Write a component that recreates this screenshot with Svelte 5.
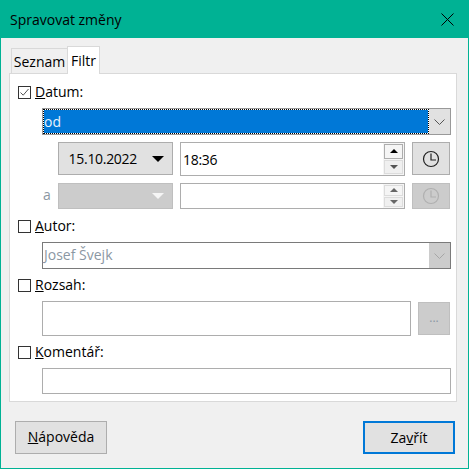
<script>
    let dateFrom = '15.10.2022';
    let timeFrom = '18:36';
    let author = 'Josef Švejk';
</script>

{#snippet clock()}
    <svg class="clock" viewBox="0 0 18 18" width="18" height="18">
        <circle cx="9" cy="9" r="7.5" />
        <path d="M9 3.5V10H14" />
    </svg>
{/snippet}

{#snippet spin()}
    <div class="spin">
        <div class="spin-btn up"><i class="tri-up"></i></div>
        <div class="spin-btn"><i class="tri-down"></i></div>
    </div>
{/snippet}

<main class="window">
    <header class="titlebar">
        <span>Spravovat změny</span>
        <svg class="close" viewBox="0 0 13 13" width="13" height="13">
            <path d="M0.5 0.5L12.5 12.5M12.5 0.5L0.5 12.5" />
        </svg>
    </header>

    <div class="content">
        <nav class="tabs">
            <div class="tab">Seznam</div>
            <div class="tab active">Filtr</div>
        </nav>

        <section class="panel">
            <label class="check-row">
                <span class="box">
                    <svg viewBox="0 0 13 13" width="13" height="13"><path d="M2.5 6.5L5.2 9.2L10.5 3" /></svg>
                </span>
                <span class="label"><u>D</u>atum:</span>
            </label>
            <div class="indent combo focused">
                <div class="combo-value">od</div>
                <div class="combo-btn">
                    <svg viewBox="0 0 11 6" width="11" height="6"><path d="M0.5 0.5L5.5 5.5L10.5 0.5" /></svg>
                </div>
            </div>

            <div class="range-row first">
                <div class="date-btn">
                    <span class="digits">{dateFrom}</span>
                    <i class="tri-down big"></i>
                </div>
                <div class="time-field">
                    <span class="digits">{timeFrom}</span>
                    {@render spin()}
                </div>
                <div class="clock-btn">{@render clock()}</div>
            </div>

            <div class="range-row second">
                <span class="and">a</span>
                <div class="date-btn off">
                    <i class="tri-down big"></i>
                </div>
                <div class="time-field off">
                    {@render spin()}
                </div>
                <div class="clock-btn off">{@render clock()}</div>
            </div>

            <label class="check-row autor">
                <span class="box"></span>
                <span class="label"><u>A</u>utor:</span>
            </label>
            <div class="indent combo disabled">
                <div class="combo-value">{author}</div>
                <div class="combo-btn">
                    <svg viewBox="0 0 11 6" width="11" height="6"><path d="M0.5 0.5L5.5 5.5L10.5 0.5" /></svg>
                </div>
            </div>

            <label class="check-row rozsah">
                <span class="box"></span>
                <span class="label"><u>R</u>ozsah:</span>
            </label>
            <div class="indent range-field">
                <div class="field"></div>
                <div class="dots-btn">...</div>
            </div>

            <label class="check-row komentar">
                <span class="box"></span>
                <span class="label"><u>K</u>omentář:</span>
            </label>
            <div class="indent field comment"></div>
        </section>

        <footer class="actions">
            <div class="btn"><u>N</u>ápověda</div>
            <div class="btn primary">Za<u>v</u>řít</div>
        </footer>
    </div>
</main>

<style>
    :global(body) {
        margin: 0;
        background: #f0f0f0;
    }

    .window {
        width: 469px;
        height: 469px;
        box-sizing: border-box;
        border: 1px solid #00b294;
        display: flex;
        flex-direction: column;
        font-family: "Open Sans", "Noto Sans", sans-serif;
        font-size: 14px;
        color: #000;
    }

    .titlebar {
        flex: none;
        height: 37px;
        background: #00b294;
        display: flex;
        align-items: center;
        justify-content: space-between;
        padding: 0 14px 0 9px;
        font-size: 14px;
    }

    .close path {
        fill: none;
        stroke: #000;
        stroke-width: 1;
    }

    .content {
        flex: 1;
        background: #f0f0f0;
        padding: 8px 11px 0 8px;
        display: flex;
        flex-direction: column;
    }

    /* tabs */
    .tabs {
        display: flex;
        align-items: flex-end;
        height: 28px;
        padding-left: 2px;
        position: relative;
        z-index: 1;
        margin-bottom: -1px;
        flex: none;
    }

    .tab {
        height: 26px;
        box-sizing: border-box;
        width: 56px;
        border: 1px solid #d9d9d9;
        border-bottom: none;
        border-right: none;
        text-align: center;
        line-height: 26px;
    }

    .tab.active {
        height: 28px;
        width: 33px;
        background: #fff;
        border-right: 1px solid #d9d9d9;
        line-height: 28px;
    }

    /* panel */
    .panel {
        height: 329px;
        box-sizing: border-box;
        background: #fff;
        border: 1px solid #d9d9d9;
        padding: 8px 5px 0 8px;
        display: flex;
        flex-direction: column;
        flex: none;
    }

    .check-row {
        display: flex;
        align-items: center;
        gap: 4px;
        height: 20px;
        flex: none;
    }

    .label {
        margin-bottom: 2px;
    }

    .box {
        width: 13px;
        height: 13px;
        box-sizing: border-box;
        border: 1px solid #333;
        background: #fff;
        display: flex;
        align-items: center;
        justify-content: center;
    }

    .box svg {
        flex: none;
    }

    .box path {
        fill: none;
        stroke: #555;
        stroke-width: 1;
    }

    .indent {
        margin-left: 24px;
    }

    /* combo boxes */
    .combo {
        height: 27px;
        width: 409px;
        box-sizing: border-box;
        display: flex;
        flex: none;
        margin-top: 6px;
        border: 1px solid #7a7a7a;
        background: #fff;
    }

    .combo-value {
        flex: 1;
        line-height: 24px;
        padding-left: 1px;
    }

    .focused {
        border-color: #999;
    }

    .focused .combo-value {
        border: 1px dotted #000;
        background: #0078d7;
        background-clip: padding-box;
        color: #e8f2fb;
        line-height: 23px;
        padding-left: 0;
    }

    .disabled .combo-value {
        color: #8b97a3;
    }

    .combo-btn {
        width: 21px;
        background: #e1e1e1;
        display: flex;
        align-items: center;
        justify-content: center;
    }

    .combo-btn path {
        fill: none;
        stroke: #555;
        stroke-width: 1;
    }

    .disabled .combo-btn {
        background: #cccccc;
    }

    .disabled .combo-btn path {
        stroke: #a6a6a6;
    }

    /* date and time rows */
    .range-row {
        display: flex;
        flex: none;
        padding-left: 40px;
        gap: 7px;
        position: relative;
    }

    .range-row.first {
        margin-top: 7px;
        height: 34px;
    }

    .range-row.second {
        margin-top: 7px;
        height: 26px;
    }

    .and {
        position: absolute;
        left: 25px;
        top: 2px;
        color: #8b97a3;
    }

    .digits {
        letter-spacing: -0.3px;
    }

    .date-btn {
        width: 115px;
        box-sizing: border-box;
        border: 1px solid #adadad;
        background: #e1e1e1;
        display: flex;
        align-items: center;
        justify-content: flex-end;
        gap: 15px;
        padding-right: 8px;
        height: 33px;
    }

    .date-btn.off {
        height: 26px;
        background: #cccccc;
        border-color: #bfbfbf;
    }

    .time-field {
        width: 225px;
        box-sizing: border-box;
        border: 1px solid #adadad;
        background: #fff;
        display: flex;
        align-items: center;
        padding-left: 2px;
    }

    .spin {
        align-self: stretch;
        margin-left: auto;
        width: 21px;
        background: #f5f5f5;
        padding: 1px;
        box-sizing: border-box;
        display: flex;
        flex-direction: column;
        gap: 1px;
    }

    .spin-btn {
        flex: 1;
        box-sizing: border-box;
        border: 1px solid #dcdcdc;
        background: #f0f0f0;
        display: flex;
        align-items: center;
        justify-content: center;
    }

    .spin-btn.up {
        border-color: #adadad;
        background: #f5f5f5;
    }

    .off .spin-btn.up {
        border-color: #dcdcdc;
    }

    .tri-up {
        border-left: 4px solid transparent;
        border-right: 4px solid transparent;
        border-bottom: 4px solid #000;
    }

    .tri-down {
        border-left: 4px solid transparent;
        border-right: 4px solid transparent;
        border-top: 4px solid #555;
    }

    .off .tri-up, .off .tri-down {
        border-bottom-color: #666;
        border-top-color: #666;
    }

    .tri-down.big {
        border-left-width: 6px;
        border-right-width: 6px;
        border-top: 6px solid #000;
    }

    .date-btn.off .tri-down.big {
        border-top-color: #f5f5f5;
    }

    .clock-btn {
        width: 38px;
        height: 33px;
        box-sizing: border-box;
        border: 1px solid #adadad;
        background: #e1e1e1;
        display: flex;
        align-items: center;
        justify-content: center;
    }

    .clock-btn.off {
        height: 26px;
        background: #cccccc;
        border-color: #bfbfbf;
    }

    .clock circle, .clock path {
        fill: none;
        stroke: #222;
        stroke-width: 1.2;
    }

    .off .clock circle, .off .clock path {
        stroke: #b0b0b0;
    }

    /* text fields */
    .autor {
        margin-top: 7px;
    }

    .rozsah {
        margin-top: 6px;
    }

    .komentar {
        margin-top: 6px;
    }

    .field {
        box-sizing: border-box;
        border: 1px solid #adadad;
        background: #fff;
    }

    .range-field {
        display: flex;
        flex: none;
        gap: 7px;
        height: 35px;
        margin-top: 6px;
    }

    .range-field .field {
        width: 369px;
    }

    .dots-btn {
        width: 32px;
        height: 33px;
        align-self: center;
        box-sizing: border-box;
        border: 1px solid #bfbfbf;
        background: #cccccc;
        color: #8b97a3;
        text-align: center;
        line-height: 30px;
        font-size: 12px;
    }

    .comment {
        width: 409px;
        height: 26px;
        flex: none;
        margin-top: 6px;
    }

    /* footer buttons */
    .actions {
        display: flex;
        justify-content: space-between;
        padding: 19px 2px 0 6px;
    }

    .btn {
        width: 92px;
        height: 33px;
        box-sizing: border-box;
        border: 1px solid #adadad;
        background: #e1e1e1;
        text-align: center;
        line-height: 30px;
    }

    .btn.primary {
        border: 2px solid #0078d7;
        line-height: 29px;
    }
</style>
